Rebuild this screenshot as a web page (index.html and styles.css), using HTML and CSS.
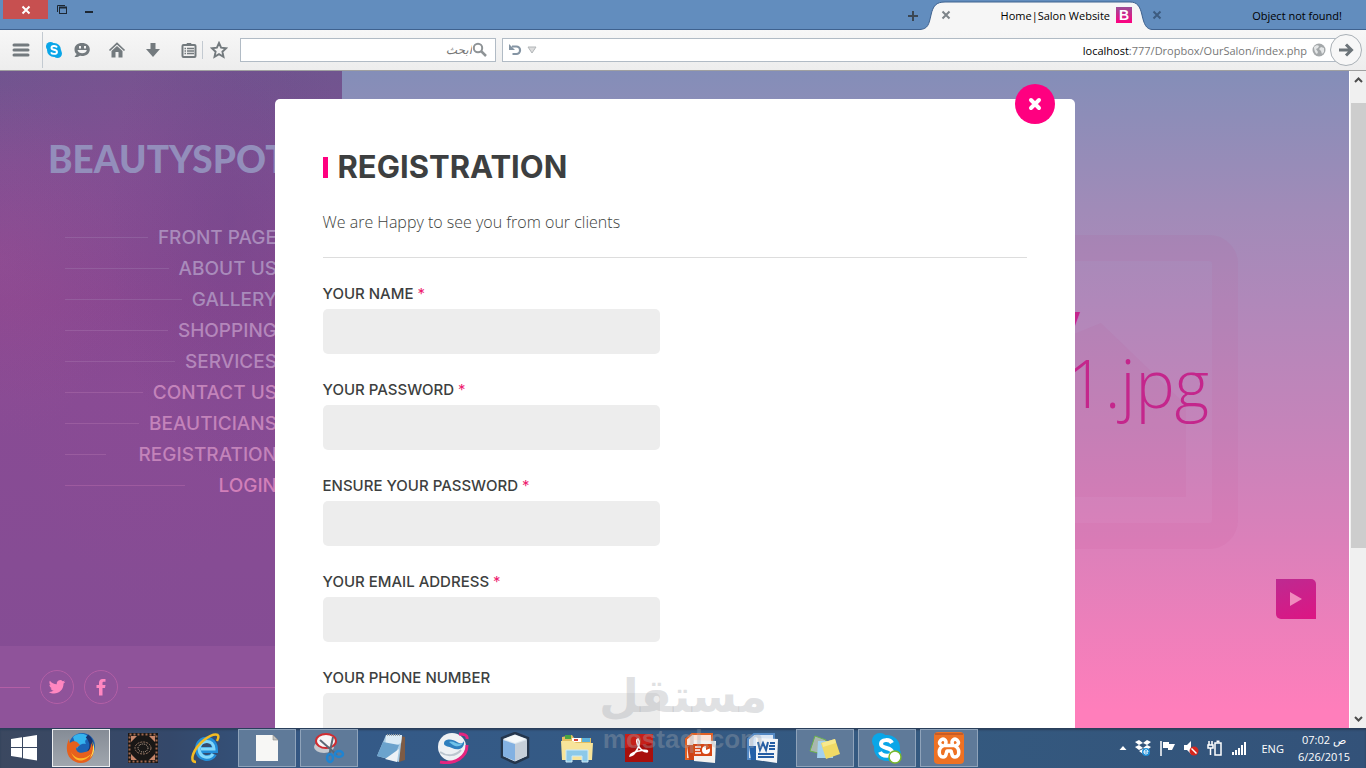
FILE: index.html
```html
<!DOCTYPE html>
<html lang="en">
<head>
    <meta charset="UTF-8">
    <meta name="viewport" content="width=device-width, initial-scale=1.0">
    <title>Home|Salon Website</title>
    <link rel="stylesheet" href="styles.css">
</head>
<body>

<!-- Tab strip -->
<header class="tabbar">
    <button class="win-close" aria-label="Close window">
        <svg width="10" height="10" viewBox="0 0 10 10"><path d="M1.500 1.500l7 7M8.500 1.500l-7 7" stroke="#fff" stroke-width="2"/></svg>
    </button>
    <button class="win-btn" aria-label="Restore">
        <svg width="12" height="12" viewBox="0 0 12 12" fill="none" stroke="#1d2733"><path d="M1.500 8V1.500H9"/><rect x="3.500" y="3.500" width="7" height="6"/><path d="M3 3.500h8" stroke-width="2"/></svg>
    </button>
    <button class="win-btn" aria-label="Minimize">
        <svg width="12" height="12" viewBox="0 0 12 12"><path d="M2 7h8v2H2z" fill="#1d2733"/></svg>
    </button>
    <span class="spacer"></span>
    <button class="new-tab" aria-label="New tab">
        <svg width="12" height="12" viewBox="0 0 12 12"><path d="M6 1v10M1 6h10" stroke="#3b4754" stroke-width="2"/></svg>
    </button>
    <div class="tab tab-active">
        <svg class="tab-shape" viewBox="0 0 232 30" preserveAspectRatio="none"><path d="M0 29.500C8 29 9 24 11 15C13 6 16 2 25 2H210C217 2 220 6 222 15C224 24 226 29 232 29.500V31H0z" fill="#f6f6f6" stroke="#3f628f"/></svg>
        <button class="tab-close" aria-label="Close tab">
            <svg width="10" height="10" viewBox="0 0 10 10"><path d="M1.500 1.500l7 7M8.500 1.500l-7 7" stroke="#7d8489" stroke-width="2"/></svg>
        </button>
        <span class="tab-title">Home|Salon Website</span>
        <span class="favicon">B</span>
    </div>
    <div class="tab tab-idle">
        <button class="tab-close" aria-label="Close tab">
            <svg width="10" height="10" viewBox="0 0 10 10"><path d="M1.500 1.500l7 7M8.500 1.500l-7 7" stroke="#3d5c80" stroke-width="2"/></svg>
        </button>
        <span class="tab-title">Object not found!</span>
    </div>
</header>

<!-- Toolbar -->
<nav class="toolbar">
    <button class="tool tool-menu" aria-label="Menu">
        <svg width="18" height="18" viewBox="0 0 18 18"><path d="M2 4h14M2 9h14M2 14h14" stroke="#737a7e" stroke-width="3" stroke-linecap="round"/></svg>
    </button>
    <span class="divider"></span>
    <button class="tool tool-skype" aria-label="Skype">
        <svg width="18" height="18" viewBox="0 0 18 18"><circle cx="5.500" cy="5.500" r="4.500" fill="#0aa6e8"/><circle cx="12.500" cy="12.500" r="4.500" fill="#0aa6e8"/><circle cx="9" cy="9" r="7" fill="#0aa6e8"/><path d="M12 6.500C11 4.500 6.500 4.500 6.500 7C6.500 9.500 12 8 12 11C12 13.500 7 13.500 6 11.300" fill="none" stroke="#fff" stroke-width="1.900"/></svg>
    </button>
    <button class="tool tool-chat" aria-label="Chat">
        <svg width="18" height="18" viewBox="0 0 18 18"><path d="M9 2C4.500 2 1.500 4.600 1.500 8.400c0 2 .8 3.600 2.200 4.700L1.500 16c2 .3 4-.1 5.300-1.200 6 .8 10-2.200 10-6.400C16.800 4.600 13.500 2 9 2z" fill="#737a7e"/><path d="M4.500 9h9.300c-.7 4.400-8.300 4.400-9.300 0z" fill="#f3f3f3"/><rect x="6" y="5" width="2" height="2.500" fill="#f3f3f3"/><rect x="11" y="5" width="2" height="2.500" fill="#f3f3f3"/></svg>
    </button>
    <button class="tool" aria-label="Home">
        <svg width="18" height="18" viewBox="0 0 18 18"><path d="M1.500 9.500L9 2.500l7.500 7" fill="none" stroke="#737a7e" stroke-width="1.700"/><path d="M3.500 10L9 5l5.500 5v6.500h-4V11h-3v5.500h-4z" fill="#737a7e"/></svg>
    </button>
    <button class="tool" aria-label="Downloads">
        <svg width="18" height="18" viewBox="0 0 18 18"><path d="M6.500 2h5v6H16l-7 8-7-8h4.500z" fill="#737a7e"/></svg>
    </button>
    <button class="tool tool-list" aria-label="Reading list">
        <svg width="18" height="18" viewBox="0 0 18 18"><path d="M6 4l1-2h4l1 2" fill="#737a7e"/><rect x="2.500" y="4" width="13" height="12" rx="1" fill="none" stroke="#737a7e" stroke-width="2"/><path d="M4.500 7.500h1.500M7 7.500h7M4.500 10h1.500M7 10h7M4.500 12.500h1.500M7 12.500h7" stroke="#737a7e" stroke-width="1.400"/></svg>
    </button>
    <span class="divider divider-short"></span>
    <button class="tool tool-star" aria-label="Bookmark">
        <svg width="18" height="18" viewBox="0 0 18 18"><path d="M9 2l2.100 4.700 5.100.5-3.800 3.500 1.100 5.100L9 13.200l-4.500 2.600 1.100-5.100L1.800 7.200l5.100-.5z" fill="none" stroke="#737a7e" stroke-width="1.900"/></svg>
    </button>
    <label class="search-box">
        <input type="search" dir="rtl" placeholder="ابحث" aria-label="ابحث">
        <svg width="15" height="16" viewBox="0 0 15 16"><circle cx="6" cy="6" r="4.200" fill="none" stroke="#8e9396" stroke-width="2"/><path d="M9 9l5 5" stroke="#8e9396" stroke-width="2.500"/></svg>
    </label>
    <div class="url-box">
        <button class="reload" aria-label="Reload">
            <svg width="14" height="14" viewBox="0 0 14 14"><path d="M4 3.500h4.300a3.700 3.700 0 0 1 0 7.500H4.500" fill="none" stroke="#8494a3" stroke-width="2.200"/><path d="M1 1v6h6z" fill="#8494a3"/></svg>
        </button>
        <button class="history" aria-label="History">
            <svg width="10" height="8" viewBox="0 0 10 8"><path d="M1 1h8L5 7z" fill="#ddd" stroke="#b2b6b9"/></svg>
        </button>
        <a class="url" href="#"><b>localhost</b>:777/Dropbox/OurSalon/index.php</a>
        <svg width="14" height="14" viewBox="0 0 14 14"><circle cx="7" cy="7" r="6.500" fill="#a4a8aa"/><path d="M2 4c2-2 4-2 5-1l-1 2-2 1 2 3-1 2C3 10 2 7 2 4zM9 4l3 1v4l-2 2-1-3-2-2z" fill="#e4e6e7"/></svg>
    </div>
    <button class="go" aria-label="Go">
        <svg width="16" height="16" viewBox="0 0 16 16"><path d="M1 8h12M8 2.500L13.500 8 8 13.500" fill="none" stroke="#6c7479" stroke-width="3"/></svg>
    </button>
</nav>

<!-- Web page -->
<main class="viewport">
    <div class="site">
        <aside class="sidebar">
            <div class="logo">BEAUTYSPOT</div>
            <ul class="menu">
                <li><a href="#">FRONT PAGE</a></li>
                <li><a href="#">ABOUT US</a></li>
                <li><a href="#">GALLERY</a></li>
                <li><a href="#">SHOPPING</a></li>
                <li><a href="#">SERVICES</a></li>
                <li><a href="#">CONTACT US</a></li>
                <li><a href="#">BEAUTICIANS</a></li>
                <li class="popup"><a href="#">REGISTRATION</a></li>
                <li class="popup"><a href="#">LOGIN</a></li>
            </ul>
            <div class="social">
                <span class="social-line social-line-start"></span>
                <a href="#" aria-label="Twitter">
                    <svg width="18" height="18" viewBox="0 0 24 24"><path d="M23 5c-.8.400-1.700.600-2.600.700.900-.600 1.600-1.400 2-2.500-.900.500-1.800.900-2.900 1.100a4.500 4.500 0 0 0-7.700 4.100C8 8.200 4.700 6.400 2.500 3.700c-1.200 2.100-.6 4.700 1.400 6-.7 0-1.400-.2-2-.6 0 2.200 1.500 4.100 3.600 4.500-.7.200-1.400.2-2 .1.600 1.800 2.200 3.100 4.200 3.100A9.100 9.100 0 0 1 1 18.700c8.900 5.500 20-.5 19.700-11.400C21.600 6.700 22.400 5.900 23 5z" fill="#ff87c0"/></svg>
                </a>
                <a href="#" aria-label="Facebook">
                    <svg width="18" height="18" viewBox="0 0 18 18"><path d="M13.500 1h-3C8 1 7 2.700 7 5v2H4.500v3H7v7.500h3.500V10H13l.5-3h-3V5c0-.7.400-1.200 1.200-1.200h1.800z" fill="#ff87c0"/></svg>
                </a>
                <span class="social-line"></span>
            </div>
        </aside>

        <section class="hero">
            <svg class="hero-art" viewBox="0 0 784 314"><rect x="13" y="13" width="758" height="288" rx="16" fill="none" stroke="#c9207f" stroke-opacity=".05" stroke-width="26"/><path d="M52 262V220L200 120l120 100L647 88l85 82v92z" fill="#c9207f" fill-opacity=".05"/></svg>
            <div class="hero-text">
                <strong>Beauty</strong>
                <span>1.jpg</span>
            </div>
            <button class="play" aria-label="Next slide">
                <svg width="14" height="14" viewBox="0 0 14 14"><path d="M1 0l12 7-12 7z" fill="#f08abd"/></svg>
            </button>
        </section>
    </div>

    <div class="scrollbar">
        <svg width="9" height="6" viewBox="0 0 9 6"><path d="M1 5l3.500-3.500L8 5" fill="none" stroke="#4c4c4c" stroke-width="2"/></svg>
        <span class="thumb"></span>
        <svg class="arrow-down" width="9" height="6" viewBox="0 0 9 6"><path d="M1 1l3.500 3.500L8 1" fill="none" stroke="#4c4c4c" stroke-width="2"/></svg>
    </div>

    <div class="overlay">
        <form class="modal">
            <button type="button" class="modal-close" aria-label="Close">
                <svg width="14" height="14" viewBox="0 0 14 14"><path d="M3 3l8 8M11 3l-8 8" stroke="#fff" stroke-width="4" stroke-linecap="round"/></svg>
            </button>
            <h2>REGISTRATION</h2>
            <p>We are Happy to see you from our clients</p>
            <hr>
            <div class="field">
                <label for="name">YOUR NAME <i>*</i></label>
                <input type="text" id="name">
            </div>
            <div class="field">
                <label for="password">YOUR PASSWORD <i>*</i></label>
                <input type="password" id="password">
            </div>
            <div class="field">
                <label for="confirm">ENSURE YOUR PASSWORD <i>*</i></label>
                <input type="password" id="confirm">
            </div>
            <div class="field">
                <label for="email">YOUR EMAIL ADDRESS <i>*</i></label>
                <input type="email" id="email">
            </div>
            <div class="field">
                <label for="phone">YOUR PHONE NUMBER</label>
                <input type="tel" id="phone">
            </div>
        </form>
    </div>
</main>

<!-- Taskbar -->
<footer class="taskbar">
    <button class="start" aria-label="Start">
        <svg width="26" height="26" viewBox="0 0 26 26"><path d="M0 4l11-1.700V12H0zM12 2.200L26 0v12H12zM0 13h11v9.700L0 21zM12 13h14v12.500l-14-2.200z" fill="#fff"/></svg>
    </button>
    <button class="app open current" aria-label="Firefox">
        <svg width="32" height="32" viewBox="0 0 32 32"><circle cx="17" cy="14" r="13" fill="#1b63b5"/><path d="M8 5c5-5 14-4 17 2-4-1-6 2-4 5-5-1-8 2-9 5z" fill="#35b4ee"/><path d="M22 4c5 4 6 11 2 16" fill="none" stroke="#17346f" stroke-width="4"/><path d="M4 7c0 2 0 3 1 4 2-2 5-2 7-1l3 3-4 3c0 4 4 6 9 4 4 0 6-4 6-9 6 9 1 20-10 20C5 31-2 20 4 7z" fill="#e6601d"/><path d="M6 20c4 8 14 8 20 2-5 8-16 10-20-2z" fill="#fdb827"/><path d="M27 9c4 7 2 13-2 17 3-6 4-11 2-17z" fill="#ffe05a"/></svg>
    </button>
    <button class="app" aria-label="Ornament">
        <svg width="30" height="30" viewBox="0 0 30 30"><rect width="30" height="30" fill="#191716"/><rect x="1.500" y="1.500" width="27" height="27" fill="none" stroke="#a1694e" stroke-width="2" stroke-dasharray="2 2"/><path d="M3 3h6L3 9zM27 3h-6l6 6zM3 27h6l-6-6zM27 27h-6l6-6z" fill="#c7866a"/><ellipse cx="15" cy="15" rx="8" ry="6" fill="none" stroke="#9b7a66" stroke-dasharray="2 1"/><ellipse cx="15" cy="15" rx="5" ry="4" fill="none" stroke="#d2b9a5" stroke-dasharray="1 1"/></svg>
    </button>
    <button class="app" aria-label="Internet Explorer">
        <svg width="32" height="32" viewBox="0 0 32 32"><path d="M25 22c-3 6-15 6-16-5 0-12 17-13 17 1H11" fill="none" stroke="#238ed8" stroke-width="6"/><path d="M24 22c-3 5-13 5-14-5 1-10 15-10 15 0H12" fill="none" stroke="#83d8fa" stroke-width="3"/><path d="M7 30C-1 30 5 16 15 8 24 1 33 0 28 9" fill="none" stroke="#f4bb22" stroke-width="2.500"/></svg>
    </button>
    <button class="app open" aria-label="Document">
        <svg width="24" height="28" viewBox="0 0 24 28"><path d="M1 1h17l5 5v21H1z" fill="#f7f7f5"/><path d="M18 1v5h5z" fill="#c4c4c0" stroke="#777" stroke-width=".5"/></svg>
    </button>
    <button class="app open" aria-label="Snipping Tool">
        <svg width="32" height="32" viewBox="0 0 32 32"><ellipse cx="11" cy="15" rx="10" ry="6" fill="#c5c9cf"/><ellipse cx="13" cy="9" rx="10" ry="7" fill="#f6f6f6" stroke="#cf2c31" stroke-width="2"/><path d="M7 8l17 15M20 5l-4 19" stroke="#5d6876" stroke-width="2"/><ellipse cx="17" cy="26" rx="3" ry="4" fill="none" stroke="#1f84d2" stroke-width="2.500"/><ellipse cx="26" cy="22" rx="4" ry="3" fill="none" stroke="#1f84d2" stroke-width="2.500"/></svg>
    </button>
    <button class="app" aria-label="Notepad">
        <svg width="32" height="32" viewBox="0 0 32 32"><path d="M26 4l4 1v23l-6 2z" fill="#7d5b45"/><path d="M11 3h16l-3 27-22-6z" fill="#a9cce4"/><path d="M11 3h16l-1 8-16 8z" fill="#dcecf6"/><path d="M8 10L2 24l16 4 6-15z" fill="#6ba3cd"/><path d="M24 17l-2 13-12-3z" fill="#edf2f6"/><path d="M12 3h14" stroke="#9aa4a9" stroke-width="2" stroke-dasharray="1 1"/></svg>
    </button>
    <button class="app" aria-label="Browser">
        <svg width="32" height="32" viewBox="0 0 32 32"><circle cx="15" cy="15" r="14" fill="#eef1f4"/><path d="M22 2c5 0 9 1 8 5M30 13c0 12-12 20-27 17" fill="none" stroke="#e5257f" stroke-width="3"/><path d="M7 12c0-6 9-5 13-2 3 2 6 2 7-1 1 8-6 10-12 7-3-2-7-1-8-4z" fill="#2e7fbe"/><path d="M12 10c5-2 8 4 14 1-2 4-7 4-10 2z" fill="#6fc2e8"/><path d="M3 20c7 5 16 4 21-2" fill="none" stroke="#bcc6cf" stroke-width="2"/></svg>
    </button>
    <button class="app" aria-label="VirtualBox">
        <svg width="32" height="32" viewBox="0 0 32 32"><path d="M16 1l13 5v19l-13 6-13-6V6z" fill="#dfe8f0" stroke="#24364d" stroke-width="2.500"/><path d="M4 8l12 4v17L4 24z" fill="#83b1e2"/><path d="M28 8l-12 4v17l12-5z" fill="#c6cfd9"/><path d="M16 3l11 4-11 4L5 7z" fill="#f5f8fa"/></svg>
    </button>
    <button class="app" aria-label="File Explorer">
        <svg width="32" height="32" viewBox="0 0 32 32"><path d="M1 5l10-2 2 3h17v21H1z" fill="#e3bf62"/><path d="M4 3h6v4H4z" fill="#48a642"/><path d="M11 6h9v4h-9z" fill="#fff"/><path d="M13 7h4v2h-4z" fill="#d54438"/><path d="M21 6h8v4h-8z" fill="#5db1da"/><path d="M0 9h12l3 2h17l-1 17H1z" fill="#f7e49a"/><path d="M5 30V18h22v12h-6v-6H11v6z" fill="#8cc9e8" stroke="#cdeaf7"/></svg>
    </button>
    <button class="app" aria-label="Adobe Reader">
        <svg width="28" height="28" viewBox="0 0 28 28"><rect width="28" height="28" fill="#a80f0c"/><path d="M0 0h28v9L0 14z" fill="#c62019"/><path d="M5 22c5-1 12-12 8-17-4 1 2 13 9 13 3-3-9-2-14 1-2 1-3 2-3 3z" fill="none" stroke="#fff" stroke-width="1.600"/></svg>
    </button>
    <button class="app" aria-label="PowerPoint">
        <svg width="32" height="32" viewBox="0 0 32 32"><path d="M7 2h20v25H1V7z" fill="#fbe3d7" stroke="#e26124" stroke-width="2"/><path d="M2 13h8v15H4z" fill="#cd4213"/><path d="M9 8l22 1-1 22-21-2z" fill="#f3f2ef"/><path d="M8 12h19v12H8z" fill="#d64715"/><circle cx="21" cy="18" r="4" fill="#fff"/><path d="M21 18v-5l5 3z" fill="#d64715"/><path d="M10 15h6M10 18h5M10 21h6" stroke="#fff" stroke-width="1.500"/></svg>
    </button>
    <button class="app" aria-label="Word">
        <svg width="32" height="32" viewBox="0 0 32 32"><path d="M7 2h20v25H1V7z" fill="#dae6f5" stroke="#5389c5" stroke-width="2"/><path d="M2 14h8v14H4z" fill="#2460a8"/><path d="M9 6l22 1-1 24-21-3z" fill="#f3f5f8"/><path d="M11 10l2 8 3-7 3 7 2-8M23 11h5M22 14h6M22 17h6M11 22h16M11 25h16" fill="none" stroke="#245da4" stroke-width="2"/></svg>
    </button>
    <button class="app open" aria-label="Sticky Notes">
        <svg width="34" height="28" viewBox="0 0 34 28"><path d="M7 2l11 4-4 14-12-3z" fill="#a8b7ae" stroke="#6bb24b"/><path d="M10 7h15v17H9z" fill="#a4d1ee"/><path d="M13 9l14-4 5 15-14 5z" fill="#f0da66"/><path d="M14 9l13-4 1 4-13 4z" fill="#f8e98d"/></svg>
    </button>
    <button class="app open" aria-label="Skype">
        <svg width="32" height="32" viewBox="0 0 32 32"><circle cx="9" cy="9" r="8" fill="#0aa6e8"/><circle cx="22" cy="22" r="8" fill="#0aa6e8"/><circle cx="16" cy="16" r="13" fill="#0aa6e8"/><path d="M21 11c-2-4-11-4-11 1 0 5 11 3 11 8 0 5-10 5-12 0" fill="none" stroke="#fff" stroke-width="4"/><circle cx="24" cy="25" r="6" fill="#fff" stroke="#79b82a" stroke-width="1.500"/></svg>
    </button>
    <button class="app open" aria-label="XAMPP">
        <svg width="32" height="32" viewBox="0 0 32 32"><rect x="1" y="0" width="30" height="32" rx="4" fill="#ee7123"/><path d="M2 2h28" stroke="#c95c25" stroke-width="2"/><path d="M12 13.500C15 8 10 6 8 8c-3 3-1 5 2 6-5 2-5 11 0 11 4 0 3-5 4-6h4c1 1 0 6 4 6 5 0 5-9 0-11 3-1 5-3 2-6-2-2-7 0-4 5.500z" fill="none" stroke="#fff" stroke-width="3.500" stroke-linejoin="round"/></svg>
    </button>
    <span class="spacer"></span>
    <div class="tray">
        <svg width="8" height="6" viewBox="0 0 8 6"><path d="M4 1l3.500 4h-7z" fill="#fff"/></svg>
        <svg width="16" height="16" viewBox="0 0 16 16"><path d="M4 0l4 3-4 2-4-3zM12 0l4 2-4 3-4-2zM4 5l4 3-4 2-4-3zM12 5l4 2-4 3-4-2zM4 11l4-2 4 2-4 3z" fill="#fff"/><circle cx="11" cy="12" r="4" fill="#1e8fd8"/><path d="M9 12c0-3 4-3 4 0H9c0 3 3 2 4 1" fill="none" stroke="#fff"/></svg>
        <svg width="16" height="16" viewBox="0 0 16 16"><path d="M2 1v15" stroke="#fff" stroke-width="1.500"/><path d="M4 2h6v2h6l-3 6H9V8H4z" fill="#fff"/></svg>
        <svg width="16" height="16" viewBox="0 0 16 16"><path d="M1 5h3l4-4v13l-4-4H1z" fill="#fff"/><circle cx="11" cy="11" r="4.500" fill="#d4271e"/><path d="M8.500 8.500l5 5" stroke="#fff" stroke-width="1.500"/></svg>
        <svg width="16" height="16" viewBox="0 0 16 16" fill="none" stroke="#fff"><path d="M2 1v4M5 1v4M1 5h5v3H1zM3.500 8v7" stroke-width="1.500"/><rect x="8" y="3" width="6" height="12" stroke-width="1.500"/><path d="M9.500 1.500h3" stroke-width="2"/></svg>
        <svg width="16" height="16" viewBox="0 0 16 16"><path d="M1 15v-3h2v3zM4 15v-5h2v5zM7 15V8h2v7zM10 15V5h2v10zM13 15V2h2v13z" fill="#fff"/></svg>
    </div>
    <span class="lang">ENG</span>
    <div class="clock">
        <span>07:02 ص</span>
        <span>6/26/2015</span>
    </div>
</footer>

<div class="watermark">
    <span class="watermark-ar" lang="ar">مستقل</span>
    <span class="watermark-en">mostaql.com</span>
</div>

</body>
</html>
```
FILE: styles.css
```css
* {
    box-sizing: border-box;
}

body {
    display: flex;
    flex-direction: column;
    height: 100vh;
    margin: 0;
    overflow: hidden;
    font-family: 'Open Sans', 'Noto Sans', sans-serif;
    font-size: 11px;
    color: #000;
}

button {
    display: flex;
    align-items: center;
    justify-content: center;
    padding: 0;
    border: none;
    background: none;
    cursor: pointer;
}

a {
    color: inherit;
    text-decoration: none;
}

svg {
    display: block;
    flex-shrink: 0;
}

.spacer {
    flex: 1;
}

/* Tab strip */
.tabbar {
    display: flex;
    height: 30px;
    padding-left: 3px;
    background-color: #628dbe;
    border-bottom: 1px solid #3f628f;
}

.win-close {
    width: 45px;
    height: 19px;
    background-color: #c75050;
}

.win-btn {
    width: 27px;
    height: 19px;
}

.new-tab {
    width: 14px;
    padding-top: 2px;
}

.tab {
    display: flex;
    align-items: center;
    position: relative;
    height: 30px;
}

.tab-active {
    width: 232px;
    padding: 0 20px 0 21px;
}

.tab-idle {
    width: 214px;
    padding-right: 24px;
}

.tab-shape {
    position: absolute;
    inset: 0;
    width: 100%;
    height: 100%;
}

.tab-close {
    position: relative;
    width: 10px;
}

.tab-title {
    position: relative;
    flex: 1;
    text-align: right;
}

.favicon {
    position: relative;
    width: 16px;
    height: 16px;
    margin-left: 6px;
    background: linear-gradient(#9b4d96, #ff0080);
    color: #fff;
    font: bold 14px/16px 'Liberation Sans', sans-serif;
    text-align: center;
}

/* Toolbar */
.toolbar {
    display: flex;
    align-items: center;
    height: 41px;
    padding: 0 4px 0 3px;
    background: linear-gradient(#f7f7f7, #ededed);
    border-bottom: 1px solid #a0a0a0;
}

.tool {
    width: 36px;
    height: 36px;
}

.tool-skype {
    width: 22px;
}

.tool-chat {
    width: 34px;
}

.tool-list {
    width: 35px;
}

.tool-star {
    width: 32px;
}

.divider {
    width: 1px;
    height: 36px;
    margin-left: 3px;
    background-color: #c3cad1;
}

.divider-short {
    height: 18px;
    margin-left: -4px;
}

.search-box {
    display: flex;
    align-items: center;
    width: 256px;
    height: 24px;
    margin: 0 6px 0 5px;
    padding-right: 8px;
    background-color: #fff;
    border: 1px solid #b1bbc5;
}

.search-box input {
    flex: 1;
    min-width: 0;
    padding: 0;
    border: none;
    outline: none;
    background: none;
    font: italic 12px 'DejaVu Sans', sans-serif;
}

.search-box input::placeholder {
    color: #777;
}

.url-box {
    display: flex;
    flex: 1;
    align-items: center;
    height: 24px;
    padding: 0 19px 0 5px;
    background-color: #fff;
    border: 1px solid #b1bbc5;
}

.history {
    margin-left: 5px;
}

.url {
    flex: 1;
    margin-right: 5px;
    color: #777;
    text-align: right;
}

.url b {
    color: #000;
    font-weight: normal;
}

.go {
    width: 32px;
    height: 32px;
    margin-left: -16px;
    background-color: #f7f7f7;
    border: 1px solid #a9b0b6;
    border-radius: 50%;
}

/* Web page */
.viewport {
    display: flex;
    flex: 1;
    min-height: 0;
    position: relative;
    overflow: hidden;
}

.site {
    display: flex;
    flex: 1;
}

.sidebar {
    display: flex;
    flex-direction: column;
    width: 342px;
    background:
        radial-gradient(ellipse at 230px 150px, rgba(105, 65, 135, .3), transparent 120px),
        radial-gradient(ellipse at 140px 90px, rgba(150, 75, 150, .2), transparent 160px),
        radial-gradient(ellipse at 0 190px, rgba(165, 80, 150, .3), transparent 130px),
        linear-gradient(#70558f, #7d5092 90px, #874890 230px, #884b94 330px, #844d94);
}

.logo {
    padding: 64px 0 0 48px;
    color: #938ebb;
    font: 900 37px/48px Lato, sans-serif;
}

.menu {
    flex: 1;
    margin: 0;
    padding: 39px 65px 0 65px;
    list-style: none;
    font: 500 19px/31px Inter, sans-serif;
}

.menu li {
    display: flex;
    align-items: center;
    gap: 10px;
    color: #b487bb;
}

.menu li::before {
    content: '';
    flex: 1;
    height: 1px;
    background-color: currentColor;
    opacity: .3;
}

.menu li:nth-child(-n+3) {
    color: #a98bbb;
}

.menu li:nth-child(n+6) {
    color: #c383ba;
}

.menu .popup {
    gap: 33px;
}

.menu li:last-child {
    color: #d17fb9;
}

.social {
    display: flex;
    align-items: center;
    gap: 10px;
    height: 82px;
    background-color: #8f539a;
}

.social a {
    display: flex;
    align-items: center;
    justify-content: center;
    width: 34px;
    height: 34px;
    border: 1px solid #b35fa6;
    border-radius: 50%;
}

.social-line {
    flex: 1;
    height: 1px;
    background-color: #b35fa6;
}

.social-line-start {
    flex: 0 0 30px;
}

.hero {
    display: flex;
    flex: 1;
    align-items: center;
    justify-content: center;
    position: relative;
    padding-bottom: 16px;
    background: linear-gradient(#848eb8, #a18bb8 140px, #b088ba 230px, #c484ba 350px, #db80ba 470px, #ff7ebb 640px);
}

.hero-art {
    width: 784px;
}

.hero-text {
    display: flex;
    flex-direction: column;
    align-items: flex-end;
    position: absolute;
    right: 140px;
    top: 215px;
    color: #c4268c;
    line-height: 64px;
}

.hero-text strong {
    padding-right: 129px;
    font-size: 34px;
}

.hero-text span {
    font-size: 66px;
    font-weight: 300;
}

.play {
    position: absolute;
    right: 33px;
    bottom: 109px;
    width: 40px;
    height: 40px;
    background: linear-gradient(160deg, #bd2a91, #dd1583);
    border-radius: 0 5px 0 5px;
}

.scrollbar {
    display: flex;
    flex-direction: column;
    align-items: center;
    width: 17px;
    padding: 6px 0;
    background-color: #f0f0f0;
    border-left: 1px solid #fff;
}

.thumb {
    width: 15px;
    height: 69%;
    margin-top: 20px;
    background-color: #cdcdcd;
}

.arrow-down {
    margin-top: auto;
}

/* Registration window */
.overlay {
    position: absolute;
    inset: 0 17px 0 0;
    padding-top: 28px;
    overflow: hidden;
}

.modal {
    position: relative;
    max-width: 800px;
    margin: 0 auto;
    padding: 48px;
    background-color: #fff;
    border-radius: 5px;
    color: #3d3f40;
}

.modal-close {
    position: absolute;
    top: -15px;
    right: 20px;
    width: 40px;
    height: 40px;
    background-color: #ff0080;
    border-radius: 50%;
}

.modal h2 {
    display: flex;
    align-items: center;
    gap: 10px;
    margin: 0;
    font: bold 31px/40px Inter, sans-serif;
}

.modal h2::before {
    content: '';
    width: 5px;
    height: 21px;
    background-color: #ff0080;
}

.modal p {
    margin: 24px 0;
    font-size: 16px;
    font-weight: 300;
    line-height: 22px;
}

.modal hr {
    margin: 0 0 26px;
    border: none;
    border-top: 1px solid #ddd;
}

.field {
    width: 48%;
    margin-bottom: 26px;
}

.field label {
    display: block;
    margin-bottom: 5px;
    font: 500 15px/20px Inter, sans-serif;
}

.field i {
    color: #ee1c70;
    font-style: normal;
    font-weight: normal;
}

.field input {
    display: block;
    width: 100%;
    height: 45px;
    padding: 0 15px;
    border: none;
    border-radius: 5px;
    background-color: #ededed;
    font-size: 16px;
}

/* Taskbar */
.taskbar {
    display: flex;
    align-items: center;
    gap: 4px;
    height: 40px;
    padding-right: 16px;
    background: linear-gradient(90deg, #3b4860, #34486a 170px, #345a88 330px, #34597f 70%, #335279);
    box-shadow: inset 0 2px 2px #2b3f5a;
    color: #fff;
}

.start {
    width: 48px;
    height: 38px;
}

.app {
    width: 58px;
    height: 38px;
}

.open {
    background-color: #5f7a99;
    border: 1px solid #8fa3ba;
}

.current {
    background: linear-gradient(#858c96, #a0a6ae);
    border-color: #eceef0;
}

.tray {
    display: flex;
    align-items: center;
    gap: 8px;
}

.lang {
    margin: 0 10px;
}

.clock {
    display: flex;
    flex-direction: column;
    align-items: center;
    line-height: 17px;
}

/* Site stamp over the lower edge of the page */
.watermark {
    display: flex;
    flex-direction: column;
    align-items: center;
    position: absolute;
    left: 50%;
    bottom: 14px;
    transform: translateX(-50%);
    color: rgba(165, 168, 174, .35);
    pointer-events: none;
}

.watermark-ar {
    font: bold 46px/56px 'DejaVu Sans', sans-serif;
}

.watermark-en {
    font: bold 26px/30px 'Liberation Sans', sans-serif;
}
```
